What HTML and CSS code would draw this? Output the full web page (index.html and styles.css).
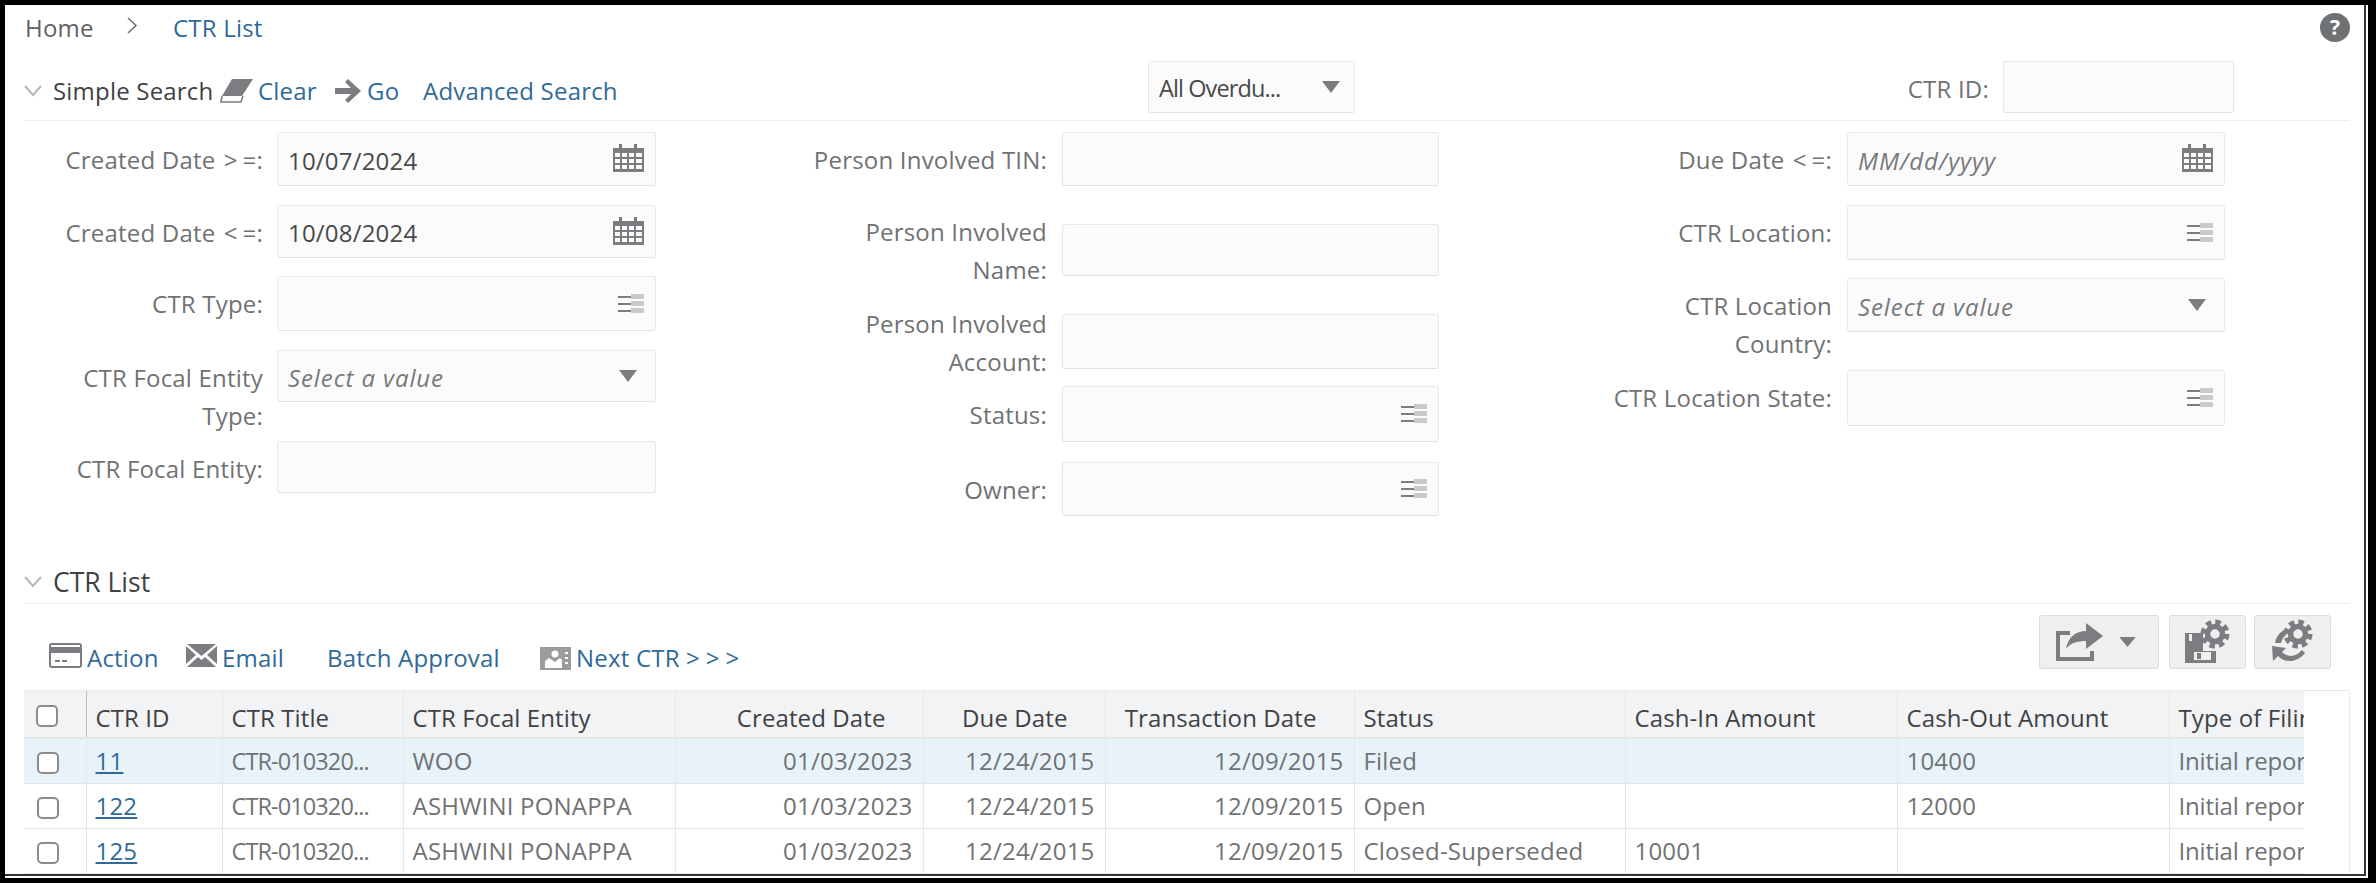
FILE: index.html
```html
<!DOCTYPE html>
<html lang="en">
<head>
<meta charset="utf-8">
<title>CTR List</title>
<link rel="stylesheet" href="styles.css">
</head>
<body>
<svg class="defs" width="0" height="0" aria-hidden="true">
  <defs>
    <symbol id="cal" viewBox="0 0 31 28">
      <path fill="#7b7d80" d="M0 4h6V0h3v4h12V0h3v4h7v28H0z"/>
      <path fill="#fbfbfb" d="M2 9h5v4H2zM9 9h5v4H9zM16 9h5v4h-5zM23 9h6v4h-6zM2 15h5v4H2zM9 15h5v4H9zM16 15h5v4h-5zM23 15h6v4h-6zM2 21h5v4H2zM9 21h5v4H9zM16 21h5v4h-5zM23 21h6v4h-6z"/>
    </symbol>
    <symbol id="lst" viewBox="0 0 26 20">
      <path fill="#7b7d80" d="M0 2h14v2H0zM0 9h14v2H0zM0 16h14v2H0z"/>
      <path fill="#c9cacb" d="M13 0h13v5H13zM13 7h13v5H13zM13 14h13v5H13z"/>
    </symbol>
    <symbol id="tri" viewBox="0 0 18 12">
      <path fill="#7b7d80" d="M0 0h18L9 12z"/>
    </symbol>
    <symbol id="chev" viewBox="0 0 18 12">
      <path fill="none" stroke="#b4b6b8" stroke-width="2" d="M1 1l8 9 8-9"/>
    </symbol>
    <symbol id="gear" viewBox="0 0 30 30">
      <circle cx="15" cy="15" r="12" fill="none" stroke="#7b7d80" stroke-width="5" stroke-dasharray="5.420 4"/>
      <circle cx="15" cy="15" r="7.500" fill="none" stroke="#7b7d80" stroke-width="5.500"/>
    </symbol>
  </defs>
</svg>
<div class="frame">
<main class="screen">
  <nav class="crumbs">
    <span class="crumb-home">Home</span>
    <svg class="crumb-sep" width="11" height="17" viewBox="0 0 11 17"><path fill="none" stroke="#6f7173" stroke-width="1.6" d="M1 1l8 7.500-8 7.500"/></svg>
    <span class="crumb-now">CTR List</span>
    <span class="help">?</span>
  </nav>

  <header class="search-head">
    <div class="search-left">
      <svg class="chev"><use href="#chev"/></svg>
      <span class="sec-title">Simple Search</span>
      <svg class="ic-eraser" width="33" height="24" viewBox="0 0 33 24"><path fill="#7b7d80" d="M12 0h21L22 17H2z"/><path fill="none" stroke="#7b7d80" stroke-width="1.600" d="M2 17l-1 6h20l2-6"/></svg>
      <a class="link clear">Clear</a>
      <svg class="ic-go" width="26" height="24" viewBox="0 0 26 24"><path fill="#7b7d80" d="M13 0l13 12-13 12-3-3 6-6H0V9h16l-6-6z"/></svg>
      <a class="link go">Go</a>
      <a class="link adv">Advanced Search</a>
    </div>
    <div class="box overdue">
      <span class="val tight">All Overdu...</span>
      <svg class="tri"><use href="#tri"/></svg>
    </div>
    <label class="lbl ctr-id-lbl">CTR ID:</label>
    <div class="box ctr-id"></div>
  </header>

  <section class="form">
    <div class="col col-a">
      <div class="field"><label class="lbl">Created Date <span class="sp">&gt;</span>=:</label><div class="box h54"><span class="val">10/07/2024</span><svg class="cal"><use href="#cal"/></svg></div></div>
      <div class="field"><label class="lbl">Created Date <span class="sp">&lt;</span>=:</label><div class="box h53"><span class="val">10/08/2024</span><svg class="cal"><use href="#cal"/></svg></div></div>
      <div class="field"><label class="lbl">CTR Type:</label><div class="box h55"><svg class="lst"><use href="#lst"/></svg></div></div>
      <div class="field"><label class="lbl">CTR Focal Entity Type:</label><div class="box h52"><span class="val ph">Select a value</span><svg class="tri tri-end"><use href="#tri"/></svg></div></div>
      <div class="field"><label class="lbl">CTR Focal Entity:</label><div class="box h52"></div></div>
    </div>
    <div class="col col-b">
      <div class="field"><label class="lbl">Person Involved TIN:</label><div class="box h54"></div></div>
      <div class="field"><label class="lbl">Person Involved Name:</label><div class="box h52"></div></div>
      <div class="field"><label class="lbl">Person Involved Account:</label><div class="box h55"></div></div>
      <div class="field"><label class="lbl">Status:</label><div class="box h56"><svg class="lst"><use href="#lst"/></svg></div></div>
      <div class="field"><label class="lbl">Owner:</label><div class="box h54"><svg class="lst"><use href="#lst"/></svg></div></div>
    </div>
    <div class="col col-c">
      <div class="field"><label class="lbl">Due Date <span class="sp">&lt;</span>=:</label><div class="box h54"><span class="val ph">MM/dd/yyyy</span><svg class="cal"><use href="#cal"/></svg></div></div>
      <div class="field"><label class="lbl">CTR Location:</label><div class="box h55"><svg class="lst"><use href="#lst"/></svg></div></div>
      <div class="field"><label class="lbl">CTR Location Country:</label><div class="box h54"><span class="val ph">Select a value</span><svg class="tri tri-end"><use href="#tri"/></svg></div></div>
      <div class="field"><label class="lbl">CTR Location State:</label><div class="box h56"><svg class="lst"><use href="#lst"/></svg></div></div>
    </div>
  </section>

  <header class="list-head">
    <svg class="chev"><use href="#chev"/></svg>
    <span class="sec-title">CTR List</span>
  </header>

  <div class="toolbar">
    <div class="actions">
      <svg class="ic-action" width="33" height="25" viewBox="0 0 33 25"><rect x="1" y="1" width="31" height="23" rx="2" fill="#fff" stroke="#7b7d80" stroke-width="2"/><path fill="#7b7d80" d="M1 4h31v6H1zM6 17h5v2H6zM13 17h5v2h-5z"/></svg>
      <a class="link a-action">Action</a>
      <svg class="ic-mail" width="31" height="23" viewBox="0 0 31 23"><path fill="#7b7d80" d="M1 0h29L15.500 12zM0 2l10 9L0 20zM31 2v18l-10-9zM1 23l11-10 3.500 3 3.500-3 11 10z"/></svg>
      <a class="link a-email">Email</a>
      <a class="link a-batch">Batch Approval</a>
      <svg class="ic-next" width="31" height="23" viewBox="0 0 31 23"><path fill="#9a9c9e" d="M0 0h31v23H0z"/><circle cx="15" cy="7" r="3.500" fill="#fff"/><path fill="#fff" d="M5 21v-7l4-3 6 4 5-4 2 2v8zM25 5h3v2h-3zM25 10h3v2h-3zM25 15h3v2h-3z"/></svg>
      <a class="link a-next">Next CTR <span class="arrows">&gt;&gt;&gt;</span></a>
    </div>
    <div class="tools">
      <button class="tool tool-export" type="button">
        <svg width="48" height="38" viewBox="0 0 48 38"><path fill="none" stroke="#7b7d80" stroke-width="4" d="M14 10H2v26h34v-8"/><path fill="#7b7d80" d="M30 0l17 13-17 13v-8c-8 0-16 2-20 8 2-12 10-18 20-18z"/></svg>
        <svg class="tool-tri" width="17" height="10" viewBox="0 0 18 11"><path fill="#7b7d80" d="M0 0h18L9 11z"/></svg>
      </button>
      <button class="tool tool-save" type="button">
        <svg width="46" height="46" viewBox="0 0 46 46"><path fill="#7b7d80" d="M0 14h18v18h13v12H0z"/><path fill="#efefef" d="M4 15h3v7H4zM9 33h17v8H9z"/><path fill="#7b7d80" d="M12 34h4v6h-4z"/><use href="#gear" x="15" y="0" width="30" height="30"/></svg>
      </button>
      <button class="tool tool-reset" type="button">
        <svg width="46" height="46" viewBox="0 0 46 46"><use href="#gear" x="13" y="0" width="30" height="30"/><path fill="#7b7d80" d="M5 24c1-6 4-10 9-13l3 4c-3 2-5 5-6 9z"/><path fill="#7b7d80" d="M2 27l14 2-4 4c6 6 14 5 20-2l3 3c-7 9-19 11-27 3l-5 5z"/></svg>
      </button>
    </div>
  </div>

  <div class="grid-box">
    <div class="grid-clip">
      <table class="grid">
        <colgroup>
          <col class="c0"><col class="c1"><col class="c2"><col class="c3"><col class="c4"><col class="c5"><col class="c6"><col class="c7"><col class="c8"><col class="c9"><col class="c10">
        </colgroup>
        <thead>
          <tr>
            <th class="chk"><span class="cb cb-head"></span></th>
            <th>CTR ID</th><th>CTR Title</th><th>CTR Focal Entity</th>
            <th class="num">Created Date</th><th class="num">Due Date</th><th class="num">Transaction Date</th>
            <th>Status</th><th>Cash-In Amount</th><th>Cash-Out Amount</th><th>Type of Filing</th>
          </tr>
        </thead>
        <tbody>
          <tr class="sel">
            <td class="chk"><span class="cb"></span></td><td><a class="id">11</a></td><td class="tight">CTR-010320...</td><td>WOO</td>
            <td class="num">01/03/2023</td><td class="num">12/24/2015</td><td class="num">12/09/2015</td>
            <td>Filed</td><td></td><td>10400</td><td class="filing">Initial report</td>
          </tr>
          <tr>
            <td class="chk"><span class="cb"></span></td><td><a class="id">122</a></td><td class="tight">CTR-010320...</td><td>ASHWINI PONAPPA</td>
            <td class="num">01/03/2023</td><td class="num">12/24/2015</td><td class="num">12/09/2015</td>
            <td>Open</td><td></td><td>12000</td><td class="filing">Initial report</td>
          </tr>
          <tr>
            <td class="chk"><span class="cb"></span></td><td><a class="id">125</a></td><td class="tight">CTR-010320...</td><td>ASHWINI PONAPPA</td>
            <td class="num">01/03/2023</td><td class="num">12/24/2015</td><td class="num">12/09/2015</td>
            <td>Closed-Superseded</td><td>10001</td><td></td><td class="filing">Initial report</td>
          </tr>
          <tr>
            <td></td><td></td><td></td><td></td><td></td><td></td><td></td><td></td><td></td><td></td><td></td>
          </tr>
        </tbody>
      </table>
    </div>
  </div>
</main>
</div>
</body>
</html>
```
FILE: styles.css
```css
* { box-sizing: border-box; }
html, body { margin: 0; height: 100%; }
body {
  background: #000;
  font-family: "Open Sans", "Liberation Sans", sans-serif;
  font-size: 24px;
  letter-spacing: .2px;
  color: #6f7173;
  overflow: hidden;
}
.defs { position: absolute; }
.frame {
  height: 873px;
  margin: 5px 8px 5px 5px;
  background: #fff;
  padding: 0 2px 2px 0;
}
.screen {
  height: 100%;
  background: #fff;
  border-right: 2px solid #333;
  border-bottom: 2px solid #333;
  overflow: hidden;
}

/* breadcrumb */
.crumbs { height: 46px; display: flex; align-items: center; padding: 0 0 2px 20px; }
.crumb-home { color: #5f6163; width: 102px; }
.crumb-sep { margin-right: 35px; margin-top: -4px; }
.crumb-now { color: #2f6a98; }
.help {
  margin-left: auto; margin-right: 14px;
  width: 30px; height: 29px; border-radius: 50%;
  background: #6f7173; color: #fff; letter-spacing: 0;
  font: bold 21px/29px "Open Sans", sans-serif; text-align: center;
}

/* search header */
.search-head {
  height: 60px; margin: 10px 14px 0 19px;
  padding-bottom: 7px;
  border-bottom: 1px solid #eceded;
  display: flex; align-items: flex-start;
}
.search-left { width: 1124px; height: 52px; display: flex; align-items: center; padding-top: 7px; }
.chev { width: 18px; height: 12px; flex: none; margin-right: 11px; }
.sec-title { color: #3f4245; width: 167px; white-space: nowrap; }
.list-head .sec-title { font-size: 26.5px; letter-spacing: 0; }
.ic-eraser { margin-right: 5px; flex: none; }
.ic-go { margin-right: 6px; flex: none; }
.link { color: #2f6a98; white-space: nowrap; }
.clear { width: 77px; }
.go { width: 56px; }
.box {
  position: relative;
  border: 1px solid #e8e8e8;
  border-bottom-color: #e1e1e1;
  border-radius: 3px;
  background: #fbfbfb;
  display: flex; align-items: center;
  padding: 2px 10px 0;
  flex: none;
}
.val { color: #47494b; white-space: nowrap; }
.ph { color: #77797b; font-style: italic; letter-spacing: .9px; }
.tight { font-size: 23.5px; letter-spacing: -.9px; }
.overdue { width: 207px; height: 52px; justify-content: space-between; padding-right: 14px; }
.tri { width: 18px; height: 12px; flex: none; margin-top: -2px; }
.tri-end { margin-left: auto; margin-right: 8px; }
.ctr-id-lbl { width: 634px; text-align: right; padding-top: 9px; line-height: 38px; }
.ctr-id { width: 231px; height: 52px; margin-left: 14px; }
.sp { letter-spacing: 5px; margin-left: 2px; }

/* form */
.form { display: flex; padding-top: 11px; height: 396px; }
.col { display: flex; flex-direction: column; flex: none; }
.col-a { width: 651px; }
.col-b { width: 693px; margin-left: 91px; }
.col-c { margin-left: 92px; }
.field { display: flex; align-items: flex-start; flex: none; }
.lbl { color: #707274; line-height: 38px; text-align: right; flex: none; }
.field .lbl { padding-top: 9px; }
.col-a .lbl { width: 258px; padding-left: 30px; }
.col-a .box { width: 379px; margin-left: 14px; }
.col-b .lbl { width: 300px; padding-left: 50px; }
.col-b .box { width: 377px; margin-left: 15px; }
.col-c .lbl { width: 300px; padding-left: 60px; }
.col-c .box { width: 378px; margin-left: 15px; }
.h52 { height: 52px; } .h53 { height: 53px; } .h54 { height: 54px; } .h55 { height: 55px; } .h56 { height: 56px; }
.cal { width: 31px; height: 28px; margin-left: auto; margin-right: 1px; margin-top: -4px; flex: none; }
.lst { width: 26px; height: 20px; margin-left: auto; margin-right: 1px; margin-top: -2px; flex: none; }

.col-a .field:nth-child(2) { margin-top: 19px; }
.col-a .field:nth-child(3) { margin-top: 18px; }
.col-a .field:nth-child(4) { margin-top: 19px; }
.col-a .field:nth-child(5) { margin-top: 6px; }

/* middle column: labels centre on their input and do not affect row height */
.col-b .field { align-items: center; }
.col-b .field .lbl { padding-top: 2px; margin-block: -14px; }
.col-b .field:nth-child(2) { margin-top: 38px; }
.col-b .field:nth-child(3) { margin-top: 38px; }
.col-b .field:nth-child(4) { margin-top: 17px; }
.col-b .field:nth-child(5) { margin-top: 20px; }

.col-c .field:nth-child(2) { margin-top: 19px; }
.col-c .field:nth-child(3) { margin-top: 18px; }
.col-c .field:nth-child(4) { margin-top: 7px; }

/* list */
.list-head {
  height: 41px; margin: 46px 14px 0 19px; padding-bottom: 3px;
  border-bottom: 1px solid #eceded;
  display: flex; align-items: center;
}
.toolbar { height: 86px; margin: 0 33px 0 44px; display: flex; justify-content: space-between; align-items: flex-start; }
.actions { display: flex; align-items: center; margin-top: 39px; height: 28px; }
.actions svg { flex: none; }
.ic-action { margin-right: 5px; margin-top: -4px; }
.a-action { width: 99px; }
.ic-mail { margin-right: 5px; margin-top: -4px; }
.a-email { width: 105px; }
.a-batch { width: 213px; }
.ic-next { margin-right: 5px; margin-top: 2px; }
.arrows { letter-spacing: 6px; }
.tools { display: flex; gap: 8px; margin-top: 11px; }
.tool {
  height: 54px; width: 77px; padding: 0;
  border: 1px solid #dcdcdc; border-radius: 3px; background: #efefef;
  display: flex; align-items: center; justify-content: center;
}
.tool-export { width: 120px; margin-right: 2px; gap: 15px; padding-right: 6px; }

.grid-box { margin: 0 14px 0 19px; border: 1px solid #e8e9ea; border-left: 0; border-bottom: 0; height: 190px; }
.grid-clip { width: 2280px; overflow: hidden; }
.grid { table-layout: fixed; width: 2480px; border-collapse: collapse; }
.c0 { width: 62px; } .c1 { width: 136px; } .c2 { width: 181px; } .c3 { width: 272px; } .c4 { width: 248px; } .c5 { width: 182px; } .c6 { width: 249px; } .c7 { width: 271px; } .c8 { width: 272px; } .c9 { width: 272px; } .c10 { width: 335px; }
.grid th {
  height: 47px; background: #f2f3f5; color: #3f4245; font-weight: 400; letter-spacing: .1px;
  text-align: left; padding: 6px 9px 0; white-space: nowrap; overflow: hidden;
  border-right: 1px solid #e4e6e8; border-bottom: 2px solid #e4e5e7;
}
.grid td {
  height: 45px; padding: 0 9px; color: #707274; white-space: nowrap; overflow: hidden;
  border-right: 1px solid #e4e6e8; border-bottom: 1px solid #e4e5e7; background: #fff;
}
.grid .sel td { background: #e8f3f9; }
.grid td.num { text-align: right; padding-right: 10px; }
.grid th.num { text-align: right; padding-right: 37px; }
.grid td.filing { letter-spacing: -.2px; }
.grid td.chk { padding: 4px 0 0 13px; }
.grid th.chk { padding: 3px 0 0 12px; border-right-color: #b9bec3; }
.cb { display: block; width: 22px; height: 22px; border: 2px solid #8a8c8e; border-radius: 5px; background: #fff; }
.id { color: #2f6a98; text-decoration: underline; }
```
